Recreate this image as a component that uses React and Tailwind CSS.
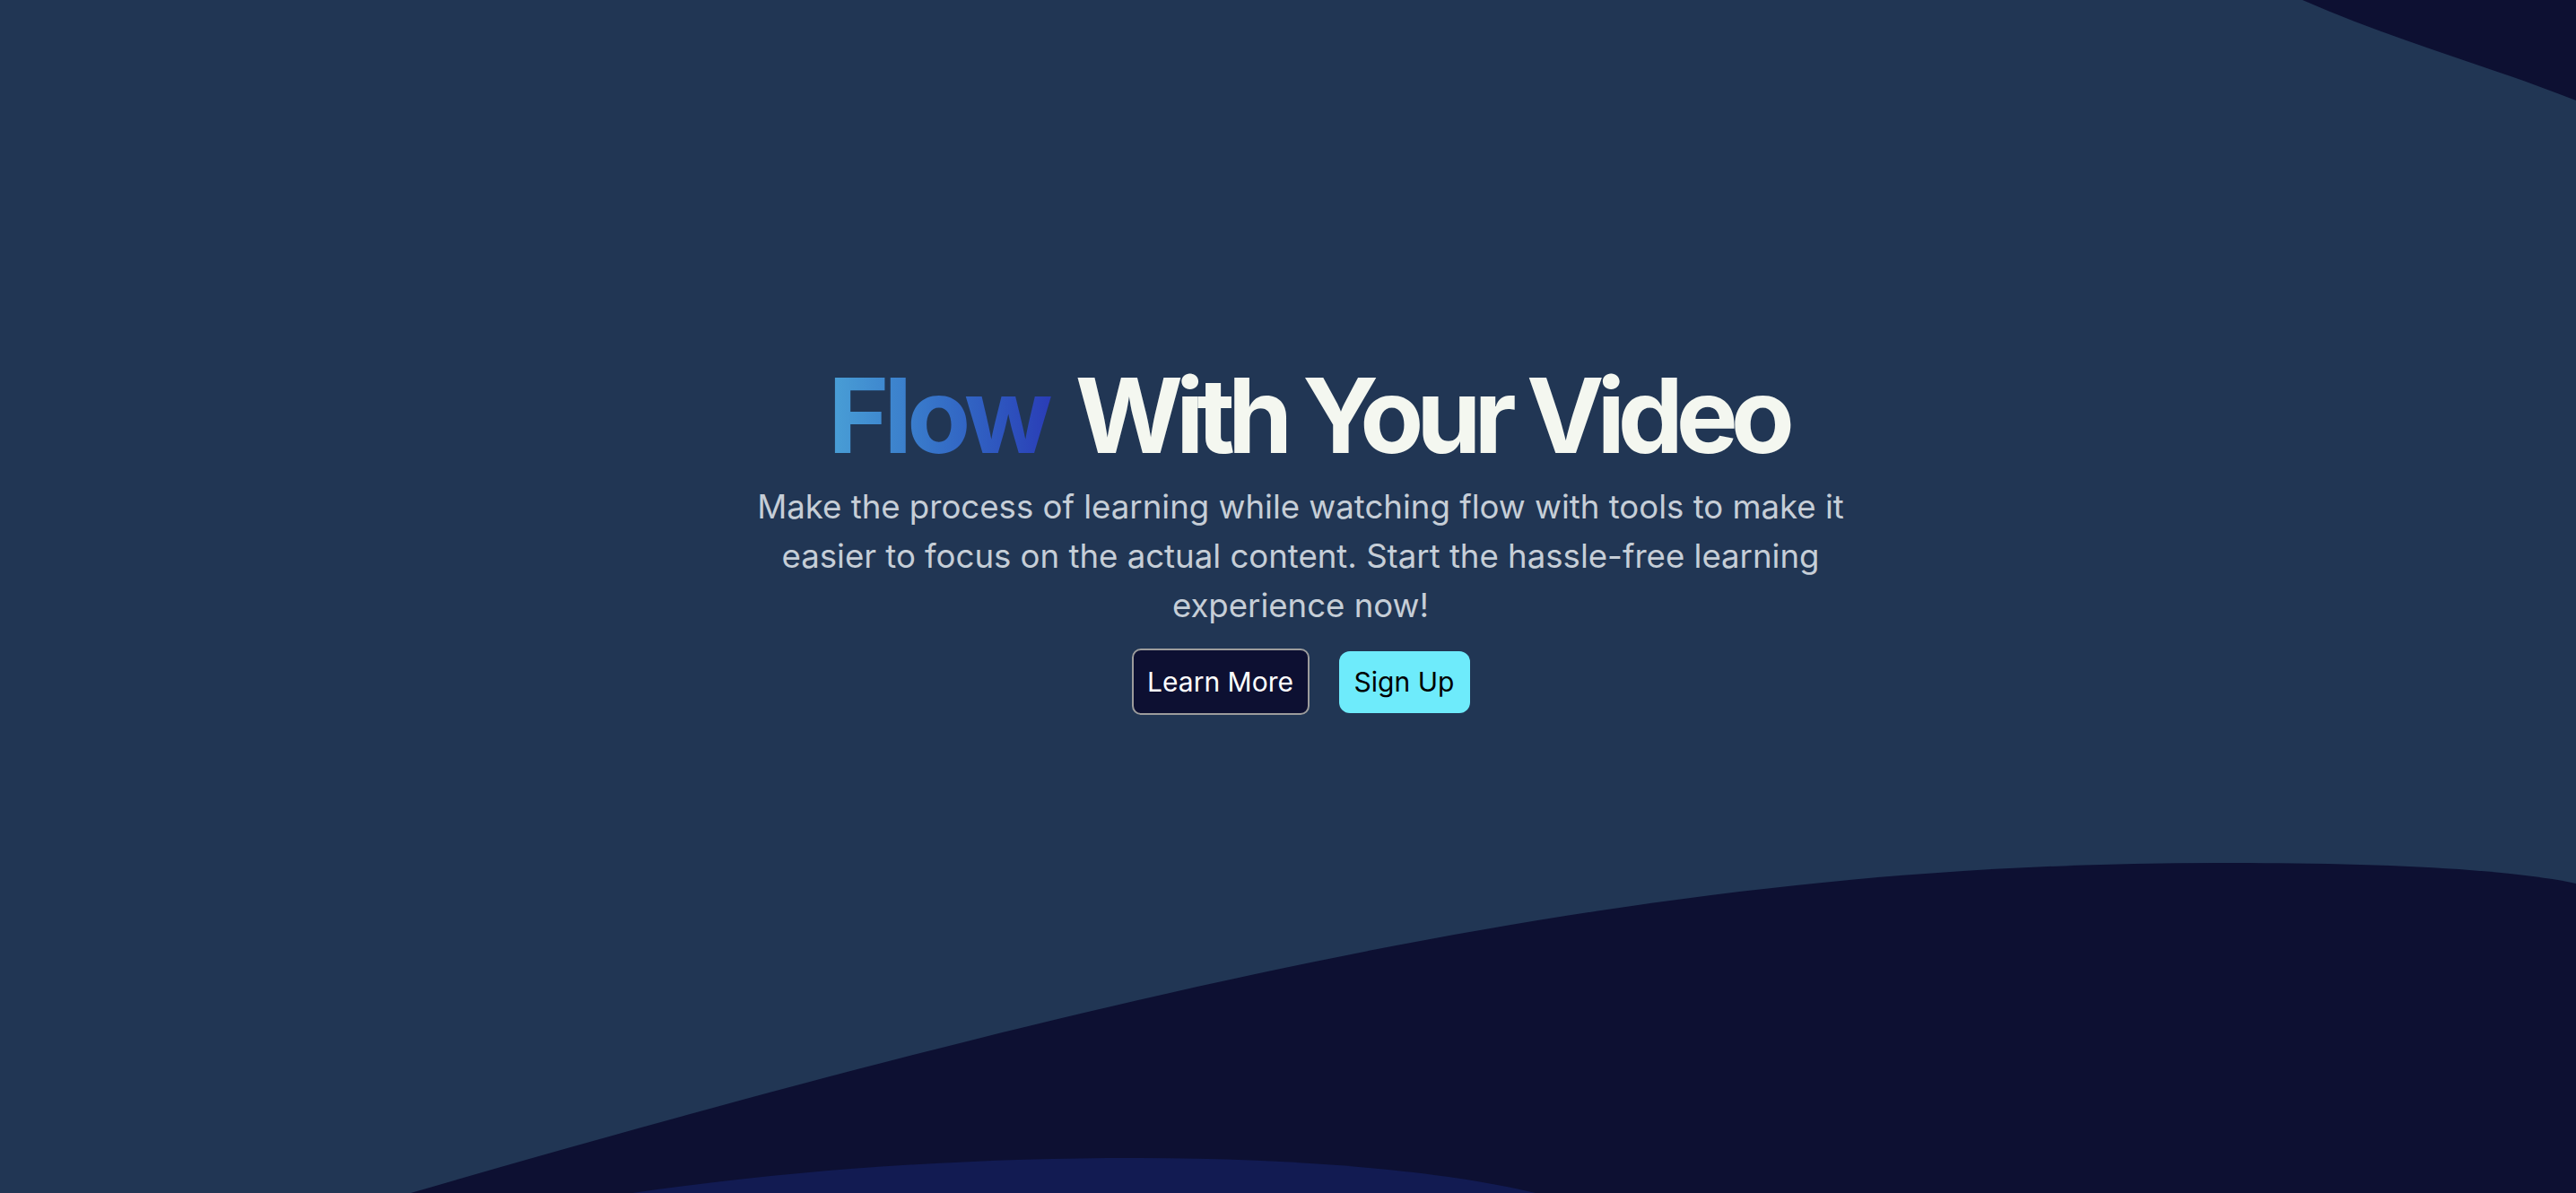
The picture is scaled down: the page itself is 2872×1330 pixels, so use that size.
import React from "react";

export default function App() {
  return (
    <div className="relative w-full h-[1330px] overflow-hidden bg-[#213654]" style={{ fontFamily: "Inter, 'Noto Sans', sans-serif" }}>
      <svg className="absolute inset-0 w-full h-full" viewBox="0 0 2872 1330" preserveAspectRatio="none" aria-hidden="true">
        <path d="M2567 0 L2872 0 L2872 112 C2770 72 2670 45 2567 0 Z" fill="#0d1032" />
        <path d="M458 1330 C1358 1069 1900 962 2473 962 C2650 962 2790 968 2872 985 L2872 1330 Z" fill="#0d1032" />
        <path d="M705 1330 C900 1302 1090 1291 1264 1291 C1430 1291 1600 1303 1712 1330 Z" fill="#121b52" />
      </svg>
      <div className="relative flex flex-col items-center pt-[405px] pl-[28px]">
        <h1 className="pl-[16px] text-[116px] leading-[116px] font-bold tracking-[-0.07em] text-[#f4f7f0] whitespace-nowrap">
          <span className="bg-linear-to-r from-[#4aa0d6] to-[#2a3bb6] bg-clip-text text-transparent tracking-[-0.05em] pr-[6px]">Flow</span>
          <span className="ml-[25px]">With Your Video</span>
        </h1>
        <p className="mt-[17px] text-[36.6px] leading-[55px] text-[#c6ced7] text-center whitespace-nowrap">
          Make the process of learning while watching flow with tools to make it
          <br />
          easier to focus on the actual content. Start the hassle-free learning
          <br />
          experience now!
        </p>
        <div className="mt-[20px] flex items-center gap-[33px]">
          <button className="h-[74px] w-[198px] rounded-[10px] border-2 border-[#9c9c9c] bg-[#0d1032] text-[30px] text-white">
            Learn More
          </button>
          <button className="h-[69px] w-[146px] rounded-[12px] bg-[#6eebfb] text-[30px] text-black">
            Sign Up
          </button>
        </div>
      </div>
    </div>
  );
}
